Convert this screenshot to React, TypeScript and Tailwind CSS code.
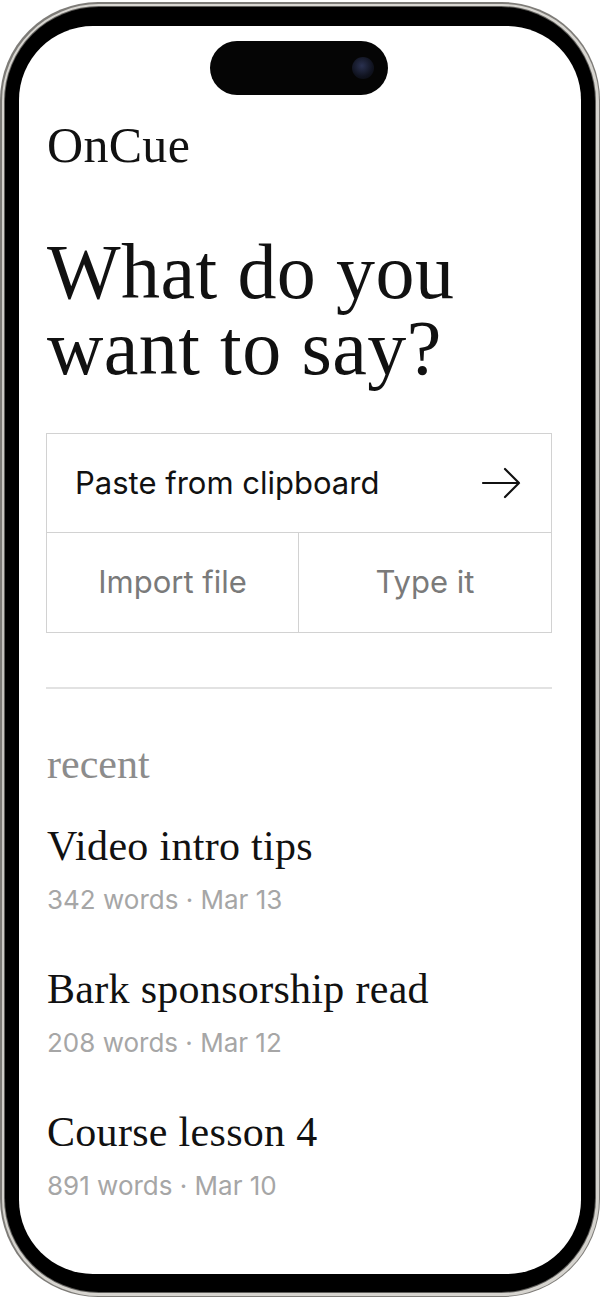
import React from "react";

const serif = "font-['Liberation_Serif','Times_New_Roman',serif]";
const sans = "font-['Inter','Liberation_Sans',sans-serif]";

function Arrow() {
  return (
    <svg width="40" height="32" viewBox="0 0 40 32" fill="none" className="shrink-0">
      <path d="M2 16 H38 M24 2 L38 16 L24 30" stroke="#111" strokeWidth="2.2" strokeLinecap="round" strokeLinejoin="round" />
    </svg>
  );
}

const recent = [
  { title: "Video intro tips", meta: "342 words · Mar 13" },
  { title: "Bark sponsorship read", meta: "208 words · Mar 12" },
  { title: "Course lesson 4", meta: "891 words · Mar 10" },
];

export default function App() {
  return (
    <div className="w-[600px] h-[1299px] bg-white pt-[2px]">
      <div className="w-[600px] h-[1295px] rounded-[98px] bg-[#7e7c78] p-[1.5px]">
        <div className="w-full h-full rounded-[97px] bg-[linear-gradient(180deg,#d9d7d2,#c4c2bd_50%,#d6d4cf)] p-[2.5px]">
          <div className="w-full h-full rounded-[95px] bg-[#5f5e5b] p-[1px]">
            <div className="w-full h-full rounded-[94px] bg-black pt-[19px] pb-[18px] px-[14px]">
              <div className="relative w-full h-full rounded-[74px] bg-white overflow-hidden pl-[27px] pr-[29px] pt-[94px]">
                {/* dynamic island */}
                <div className="absolute left-[191px] top-[15px] w-[178px] h-[54px] rounded-full bg-[#050505] flex items-center justify-end pr-[14px]">
                  <div className="w-[22px] h-[22px] rounded-full bg-[radial-gradient(circle_at_45%_40%,#2a3150,#10131f_60%,#07080c)]" />
                </div>

                <div className={`${serif} text-[50px] leading-[50px] text-[#111] tracking-[0.3px] pl-[1px]`}>OnCue</div>

                <h1 className={`${serif} mt-[64px] text-[78px] leading-[76px] text-[#111] tracking-[0.4px] pl-[1px]`}>
                  What do you
                  <br />
                  want to say?
                </h1>

                <div className="mt-[47px] border border-[#d2d2d2]">
                  <div className="h-[99px] flex items-center justify-between pl-[28px] pr-[30px] border-b border-[#d2d2d2]">
                    <span className={`${sans} text-[31px] text-[#111]`}>Paste from clipboard</span>
                    <Arrow />
                  </div>
                  <div className="grid grid-cols-2 h-[99px]">
                    <div className={`${sans} flex items-center justify-center border-r border-[#d2d2d2] text-[31px] text-[#7a7a7a]`}>Import file</div>
                    <div className={`${sans} flex items-center justify-center text-[31px] text-[#7a7a7a]`}>Type it</div>
                  </div>
                </div>

                <div className="mt-[54px] h-[1.5px] bg-[#e2e2e2]" />

                <div className={`${serif} mt-[54px] text-[42px] leading-[42px] text-[#8c8c8c] pl-[1px]`}>recent</div>

                <div className="mt-[40px] flex flex-col gap-[55px] pl-[1px]">
                  {recent.map((r) => (
                    <div key={r.title} className="flex flex-col">
                      <div className={`${serif} text-[42px] leading-[42px] text-[#111] tracking-[0.3px]`}>{r.title}</div>
                      <div className={`${sans} mt-[20px] text-[26px] leading-[26px] text-[#a6a6a6]`}>{r.meta}</div>
                    </div>
                  ))}
                </div>
              </div>
            </div>
          </div>
        </div>
      </div>
    </div>
  );
}
